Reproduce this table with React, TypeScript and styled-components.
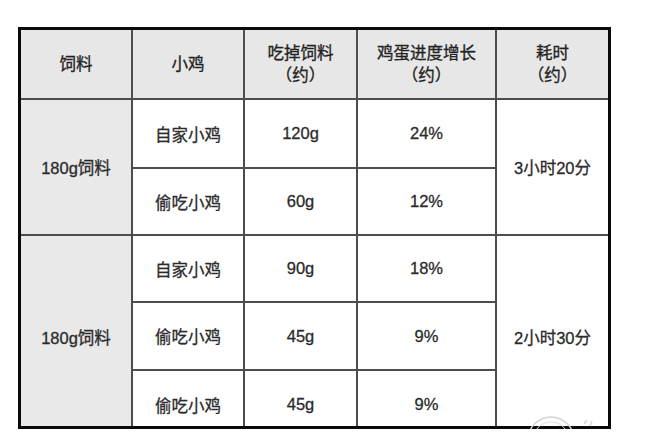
import styled, { createGlobalStyle } from 'styled-components';

const GlobalStyle = createGlobalStyle`
  body {
    margin: 0;
    background: #fff;
    font-family: "Liberation Sans", "Noto Sans CJK SC", sans-serif;
  }
`;

const Page = styled.div`
  padding: 27px 0 0 18px;
  position: relative;
`;

const Frame = styled.div`
  box-sizing: border-box;
  width: 593px;
  height: 402px;
  border: 3px solid #0a0a0a;
  overflow: hidden;
`;

const Table = styled.table`
  width: 100%;
  table-layout: fixed;
  border-collapse: collapse;
  border-style: hidden;
  color: #2b2b2b;
  font-size: 16.5px;
  -webkit-text-stroke: 0.3px currentColor;
`;

const Row = styled.tr<{ $h: number }>`
  height: ${(p) => p.$h}px;
`;

const Head = styled.th`
  background: #e7e7e7;
  border: 2px solid #4d4d4d;
  font-weight: normal;
  color: #222;
  line-height: 22px;
  padding: 0;
  text-align: center;
  vertical-align: middle;
`;

const Cell = styled.td<{ $shade?: boolean }>`
  background: ${(p) => (p.$shade ? '#e9e9e9' : '#fff')};
  border: 2px solid #4d4d4d;
  padding: 0;
  text-align: center;
  vertical-align: middle;
`;

const Stamp = styled.svg`
  position: absolute;
  left: 520px;
  top: 410px;
  pointer-events: none;
`;

type Item = { chick: string; eat: string; grow: string };

const groups: { feed: string; time: string; items: Item[] }[] = [
  {
    feed: '180g饲料',
    time: '3小时20分',
    items: [
      { chick: '自家小鸡', eat: '120g', grow: '24%' },
      { chick: '偷吃小鸡', eat: '60g', grow: '12%' },
    ],
  },
  {
    feed: '180g饲料',
    time: '2小时30分',
    items: [
      { chick: '自家小鸡', eat: '90g', grow: '18%' },
      { chick: '偷吃小鸡', eat: '45g', grow: '9%' },
      { chick: '偷吃小鸡', eat: '45g', grow: '9%' },
    ],
  },
];

const heights = [69, 67, 67, 68, 68];

export default function App() {
  let k = 0;
  return (
    <>
      <GlobalStyle />
      <Page>
        <Frame>
          <Table>
            <colgroup>
              <col style={{ width: 111 }} />
              <col style={{ width: 112 }} />
              <col style={{ width: 113 }} />
              <col style={{ width: 139 }} />
              <col style={{ width: 112 }} />
            </colgroup>
            <thead>
              <Row $h={69}>
                <Head>饲料</Head>
                <Head>小鸡</Head>
                <Head>
                  吃掉饲料
                  <br />
                  （约）
                </Head>
                <Head>
                  鸡蛋进度增长
                  <br />
                  （约）
                </Head>
                <Head>
                  耗时
                  <br />
                  （约）
                </Head>
              </Row>
            </thead>
            <tbody>
              {groups.map((g, gi) =>
                g.items.map((it, i) => {
                  const h = heights[k++];
                  return (
                    <Row $h={h} key={`${gi}-${i}`}>
                      {i === 0 && (
                        <Cell $shade rowSpan={g.items.length}>
                          {g.feed}
                        </Cell>
                      )}
                      <Cell>{it.chick}</Cell>
                      <Cell>{it.eat}</Cell>
                      <Cell>{it.grow}</Cell>
                      {i === 0 && <Cell rowSpan={g.items.length}>{g.time}</Cell>}
                    </Row>
                  );
                })
              )}
            </tbody>
          </Table>
        </Frame>
        <Stamp width="90" height="20" viewBox="0 0 90 20">
          <circle cx="31" cy="30" r="23" fill="none" stroke="#d4d4d4" strokeWidth="1.5" />
          <circle cx="31" cy="30" r="18" fill="none" stroke="#e2e2e2" strokeWidth="1" />
          <path d="M64 14 l3 -4 M70 16 l2 -5" stroke="#d8d8d8" strokeWidth="1.5" />
        </Stamp>
      </Page>
    </>
  );
}
